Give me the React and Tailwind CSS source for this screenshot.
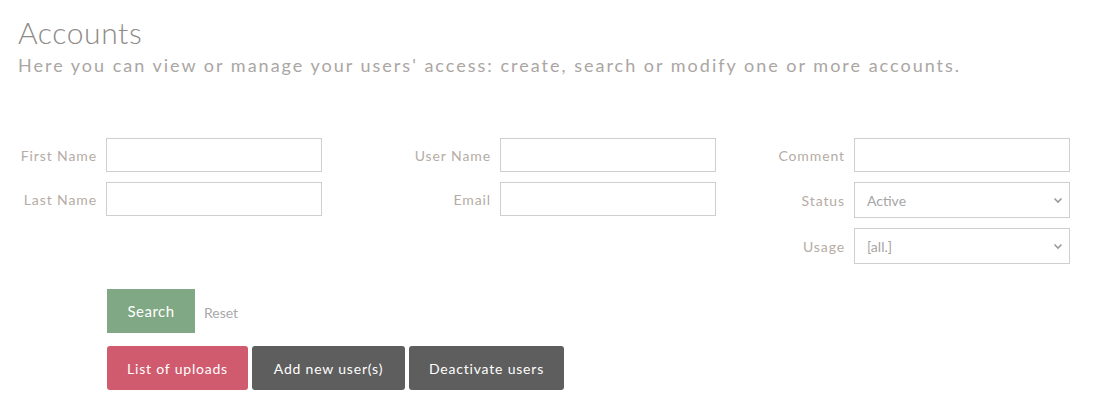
import React from 'react';

const font = { fontFamily: 'Lato, "Noto Sans", sans-serif' };

function Field({ label, labelW, select, value }) {
  return (
    <div className="flex items-center">
      <label className="text-right text-[14px] tracking-[0.9px] text-[#b5aca5] pr-[9px]" style={{ width: labelW }}>
        {label}
      </label>
      {select ? (
        <div className="relative w-[216px] h-[36px] border border-[#cfcfcf] bg-white flex items-center px-3 text-[14px] text-[#a5a5a5]">
          {value}
          <svg className="absolute right-[6px] top-[14px]" width="10" height="7" viewBox="0 0 10 7">
            <path d="M1.5 1.5 L5 5 L8.5 1.5" fill="none" stroke="#9a9a9a" strokeWidth="1.6" />
          </svg>
        </div>
      ) : (
        <input className="w-[216px] h-[34px] border border-[#cfcfcf] bg-white outline-none" />
      )}
    </div>
  );
}

export default function App() {
  return (
    <div className="w-[1101px] h-[410px] bg-white pl-[18px] pt-[14px]" style={font}>
      <h1 className="text-[30px] leading-[36px] text-[#8e8a87] tracking-[0.6px] font-light">Accounts</h1>
      <p className="text-[18px] leading-[24px] text-[#aaa6a3] tracking-[2px] mt-[3px]">
        Here you can view or manage your users' access: create, search or modify one or more accounts.
      </p>

      {/* Search form */}
      <div className="flex mt-[61px] -ml-[18px]">
        <div className="flex flex-col gap-[10px]">
          <Field label="First Name" labelW={106} />
          <Field label="Last Name" labelW={106} />
        </div>
        <div className="flex flex-col gap-[10px]">
          <Field label="User Name" labelW={178} />
          <Field label="Email" labelW={178} />
        </div>
        <div className="flex flex-col gap-[10px]">
          <Field label="Comment" labelW={138} />
          <Field label="Status" labelW={138} select value="Active" />
          <Field label="Usage" labelW={138} select value="[all.]" />
        </div>
      </div>

      <div className="flex items-end gap-[9px] mt-[25px] ml-[89px]">
        <button className="w-[88px] h-[44px] bg-[#80a884] text-white text-[15px] tracking-[0.5px]">Search</button>
        <span className="text-[14px] text-[#a9a9a9] pb-[10px]">Reset</span>
      </div>

      <div className="flex gap-[4px] mt-[13px] ml-[89px]">
        <button className="w-[141px] h-[44px] rounded-[3px] bg-[#d05a6e] text-white text-[14px] tracking-[0.8px]">List of uploads</button>
        <button className="w-[153px] h-[44px] rounded-[3px] bg-[#5e5e5e] text-white text-[14px] tracking-[0.8px]">Add new user(s)</button>
        <button className="w-[155px] h-[44px] rounded-[3px] bg-[#5e5e5e] text-white text-[14px] tracking-[0.8px]">Deactivate users</button>
      </div>
    </div>
  );
}
